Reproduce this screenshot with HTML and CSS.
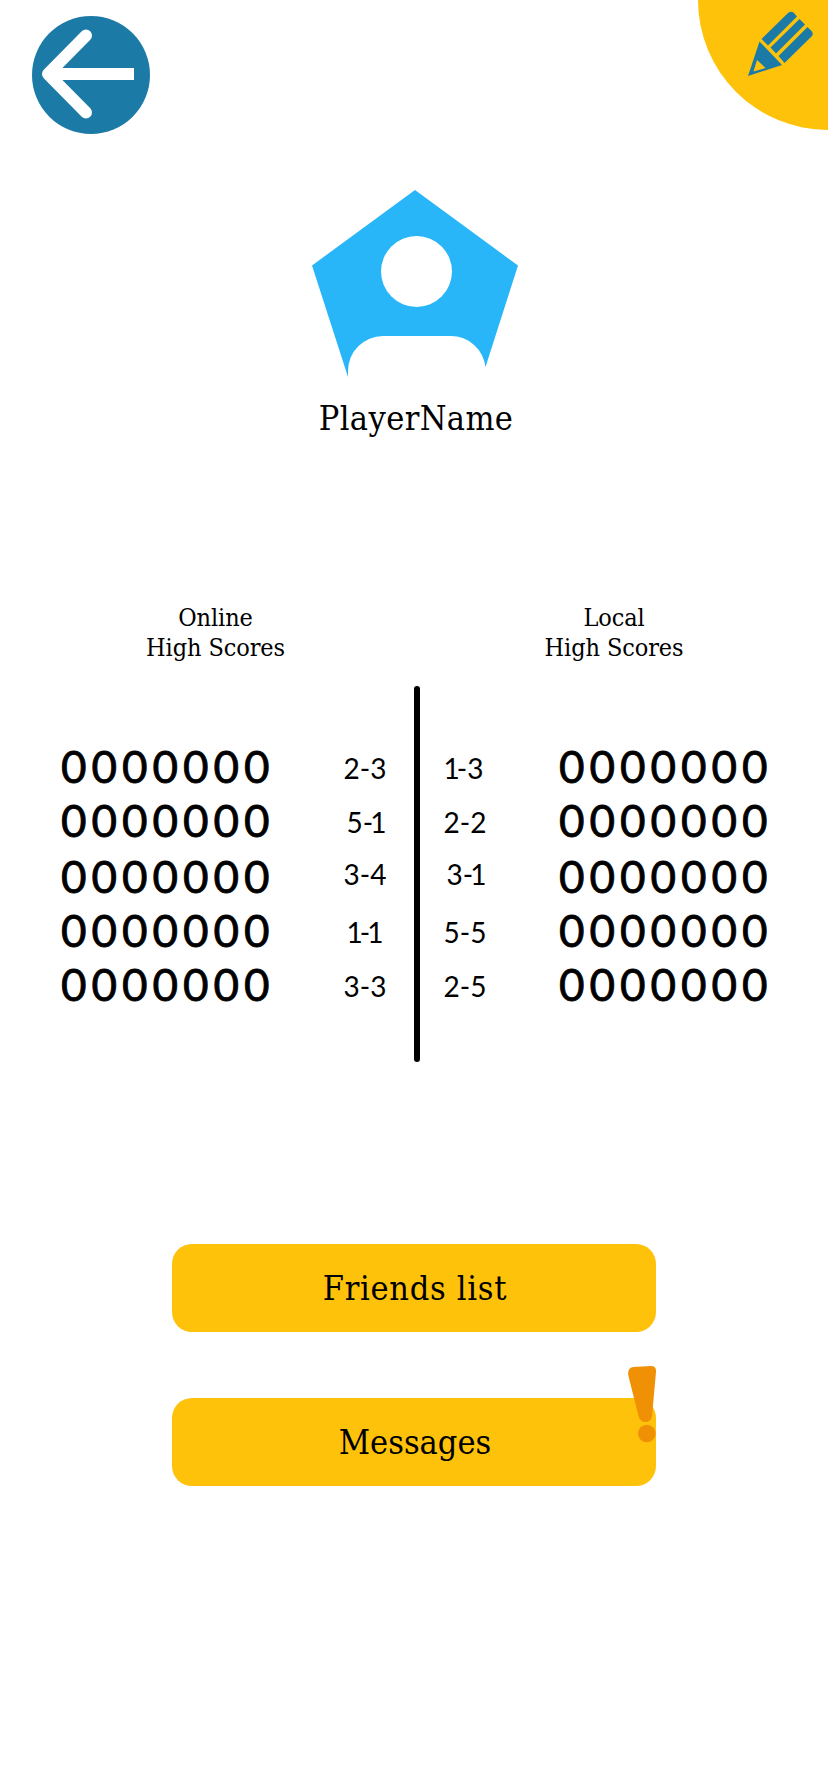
FILE: index.html
```html
<!DOCTYPE html>
<html lang="en">
<head>
<meta charset="utf-8">
<title>Player profile</title>
<link rel="stylesheet" href="styles.css">
</head>
<body>
<main class="screen">
  <header class="topbar">
    <svg class="back" viewBox="0 0 118 118" role="img" aria-label="Back">
      <circle cx="59" cy="59" r="59" fill="#1c7aa7"/>
      <path d="M54 19.500L16 58l38 38.500" fill="none" stroke="#fff" stroke-width="12" stroke-linecap="round" stroke-linejoin="round"/>
      <path d="M18 58h84" stroke="#fff" stroke-width="12"/>
    </svg>
    <svg class="edit" viewBox="0 0 130 130" role="img" aria-label="Edit">
      <circle cx="130" cy="0" r="130" fill="#ffc20a"/>
      <g fill="#1c7aa7">
        <path d="M63.500 39L90 13Q93 10.500 96 13L99 16.500L70 45.500Z"/>
        <path d="M72.500 47.500L101.500 19L107 24.500L78 53.500Z"/>
        <path d="M80.500 56L109.500 27L113.500 31Q116 34 113.500 36.500L86.500 63Z"/>
        <path fill-rule="evenodd" d="M61.500 41.500L84 65L50 76ZM59 60L55.500 71.500L67.500 68Z"/>
      </g>
    </svg>
  </header>

  <section class="profile">
    <svg class="avatar" viewBox="312 190 206 188" aria-hidden="true">
      <path fill="#29b6f8" d="M415 190L518 265.500L485.500 367A35 35 0 0 0 451 336H383A35 35 0 0 0 348 371V377L312 265.500Z"/>
      <circle cx="416.500" cy="271.500" r="35.500" fill="#fff"/>
    </svg>
    <h1 class="name">PlayerName</h1>
  </section>

  <section class="scores">
    <div class="board online">
      <h2 class="title">Online<br>High Scores</h2>
      <ol class="list">
        <li class="row"><span class="points">0000000</span><span class="result">2-3</span></li>
        <li class="row"><span class="points">0000000</span><span class="result">5-<span class="one">1</span></span></li>
        <li class="row late"><span class="points">0000000</span><span class="result raised">3-4</span></li>
        <li class="row"><span class="points">0000000</span><span class="result"><span class="one">1</span>-<span class="one">1</span></span></li>
        <li class="row"><span class="points">0000000</span><span class="result">3-3</span></li>
      </ol>
    </div>
    <div class="divider"></div>
    <div class="board local">
      <h2 class="title">Local<br>High Scores</h2>
      <ol class="list">
        <li class="row"><span class="result"><span class="one">1</span>-3</span><span class="points">0000000</span></li>
        <li class="row"><span class="result">2-2</span><span class="points">0000000</span></li>
        <li class="row late"><span class="result raised">3-<span class="one">1</span></span><span class="points">0000000</span></li>
        <li class="row"><span class="result">5-5</span><span class="points">0000000</span></li>
        <li class="row"><span class="result">2-5</span><span class="points">0000000</span></li>
      </ol>
    </div>
  </section>

  <nav class="actions">
    <button class="button friends" type="button">Friends list</button>
    <button class="button messages" type="button">Messages
      <svg class="alert" viewBox="0 0 28 77" aria-hidden="true">
        <path d="M5 1L23 0Q28.500 0 28 6L24 50Q23 56 17.500 56Q12 56 10.500 50L.2 9Q-.5 2 5 1Z" fill="#f09105"/>
        <circle cx="18.800" cy="67.500" r="8.800" fill="#f09105"/>
      </svg>
    </button>
  </nav>
</main>
</body>
</html>
```
FILE: styles.css
```css
* { box-sizing: border-box; }

body {
  margin: 0;
  background: #fff;
  color: #000;
  font-family: "DejaVu Serif Condensed", "DejaVu Serif", serif;
  font-stretch: condensed;
}

h1, h2, ol { margin: 0; padding: 0; font-weight: 400; list-style: none; }

.screen {
  display: flex;
  flex-direction: column;
  width: 828px;
  height: 1792px;
  overflow: hidden;
}

.topbar {
  display: flex;
  justify-content: space-between;
  height: 190px;
  padding-left: 32px;
}
.back { width: 118px; height: 118px; margin-top: 16px; }
.edit { width: 130px; height: 130px; }

.profile {
  display: flex;
  flex-direction: column;
  align-items: center;
  height: 412px;
  padding-left: 2px;
}
.avatar { width: 206px; height: 188px; }
.name {
  margin-top: 18px;
  padding-left: 2px;
  font-size: 34px;
  line-height: 44px;
  letter-spacing: 0.4px;
}

.scores { display: flex; height: 642px; }
.board { width: 414px; }
.local { width: 408px; }
.title {
  height: 137px;
  padding-top: 1px;
  font-size: 25px;
  line-height: 30px;
  letter-spacing: -0.1px;
  text-align: center;
}
.online .title { width: 431px; }
.local .title { width: 388px; }
.divider {
  width: 6px;
  height: 376px;
  margin-top: 84px;
  border-radius: 3px;
  background: #000;
}
.row { display: flex; align-items: center; height: 54px; }
.late { margin-top: 2px; }
.points {
  width: 215px;
  font-family: Lato, sans-serif;
  font-size: 44px;
  line-height: 54px;
  letter-spacing: 5px;
  -webkit-text-stroke: 0.8px #000;
  white-space: nowrap;
}
.result {
  width: 60px;
  padding-top: 4px;
  font-family: Lato, sans-serif;
  font-size: 28px;
  line-height: 50px;
  text-align: center;
}
.one { margin: 0 -3px; }
.raised { padding-top: 0; padding-bottom: 4px; }
.online .row { padding-left: 61px; gap: 59px; }
.local .row { padding-left: 15px; gap: 64px; }

.actions {
  display: flex;
  flex-direction: column;
  align-items: flex-start;
  gap: 66px;
  padding-left: 172px;
}
.button {
  position: relative;
  width: 484px;
  height: 88px;
  padding: 0 0 0 2px;
  border: 0;
  border-radius: 20px;
  background: #ffc20a;
  color: #000;
  font-family: inherit;
  font-stretch: inherit;
  font-size: 34px;
  line-height: 88px;
}
.friends { letter-spacing: 0.7px; }
.alert {
  position: absolute;
  top: -32px;
  right: 0;
  width: 28px;
  height: 77px;
}
```
